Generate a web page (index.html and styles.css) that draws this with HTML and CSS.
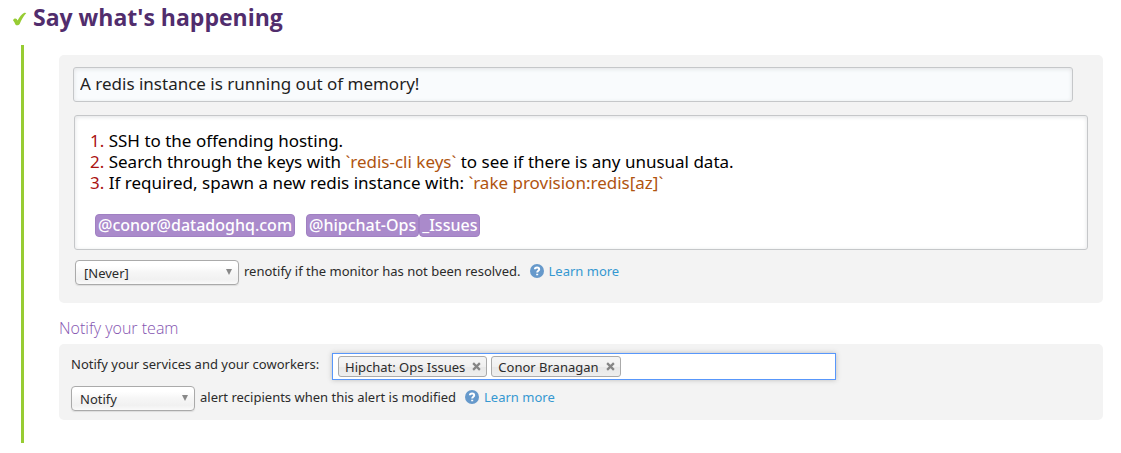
FILE: index.html
```html
<!DOCTYPE html>
<html lang="en">
<head>
<meta charset="utf-8">
<title>Say what's happening</title>
<link rel="stylesheet" href="styles.css">
</head>
<body>
<main class="step">
  <h2 class="step-title">
    <svg class="check" viewBox="0 0 14 14" aria-hidden="true"><path d="M.5 8.200C1.200 6.300 3.200 5.900 4.200 7L5.100 8.500C7 5 9.200 2.200 11.800 .8L13.800 .9C10.900 4.200 8.800 7.900 7.200 11.900C6.200 13.500 3.900 13.700 2.900 12.400C2.400 10.900 1.500 9.400 .5 8.200Z"/></svg>
    Say what's happening
  </h2>
  <div class="step-body">
    <section class="panel message">
      <div class="title-row"><input class="title-input" type="text" aria-label="Monitor title" value="A redis instance is running out of memory!"></div>
      <div class="editor" contenteditable="true" role="textbox" aria-multiline="true" aria-label="Monitor message" spellcheck="false">
        <div class="line"><span class="num">1.</span> SSH to the offending hosting.</div>
        <div class="line"><span class="num">2.</span> Search through the keys with <span class="code">`redis-cli keys`</span> to see if there is any unusual data.</div>
        <div class="line"><span class="num">3.</span> If required, spawn a new redis instance with: <span class="code">`rake provision:redis[az]`</span></div>
        <div class="mentions"><span class="mention">@conor@datadoghq.com</span><span class="mention-pair"><span class="mention">@hipchat-Ops</span><span class="mention">_Issues</span></span></div>
      </div>
      <div class="option-row renotify">
        <span class="select-wrap"><select id="renotify" class="select wide"><option>[Never]</option></select></span>
        <label class="label" for="renotify">renotify if the monitor has not been resolved.</label>
        <svg class="help" viewBox="0 0 14 14" aria-hidden="true"><circle cx="7" cy="7" r="7"/><path d="M4.900 5.300C5 2.900 9.200 2.900 9.200 5.200C9.200 6.700 7.200 6.700 7.200 8.400M7.200 9.800V11.200"/></svg>
        <a class="link" href="#renotify">Learn more</a>
      </div>
    </section>
    <h3 class="sub-title">Notify your team</h3>
    <section class="panel team">
      <div class="option-row">
        <label class="label label-recipients" for="recipients">Notify your services and your coworkers:</label>
        <div class="tokens">
          <span class="token">Hipchat: Ops Issues <button type="button" class="remove" aria-label="Remove Hipchat: Ops Issues"><svg viewBox="0 0 8 8" aria-hidden="true"><path d="M1 1L7 7M7 1L1 7"/></svg></button></span>
          <span class="token">Conor Branagan <button type="button" class="remove" aria-label="Remove Conor Branagan"><svg viewBox="0 0 8 8" aria-hidden="true"><path d="M1 1L7 7M7 1L1 7"/></svg></button></span>
          <input id="recipients" class="token-input" type="text">
        </div>
      </div>
      <div class="option-row">
        <span class="select-wrap"><select id="alert" class="select"><option>Notify</option></select></span>
        <label class="label" for="alert">alert recipients when this alert is modified</label>
        <svg class="help" viewBox="0 0 14 14" aria-hidden="true"><circle cx="7" cy="7" r="7"/><path d="M4.900 5.300C5 2.900 9.200 2.900 9.200 5.200C9.200 6.700 7.200 6.700 7.200 8.400M7.200 9.800V11.200"/></svg>
        <a class="link" href="#alert">Learn more</a>
      </div>
    </section>
  </div>
</main>
</body>
</html>
```
FILE: styles.css
```css
* { box-sizing: border-box; }
body {
  margin: 0;
  background: #fff;
  color: #2b2b2b;
  font: 13px/22px "Noto Sans", "Open Sans", sans-serif;
}
input, select, button { font: inherit; color: inherit; }
.step { padding: 1px 18px 10px 12px; }
.step-title {
  display: flex;
  align-items: center;
  gap: 6px;
  margin: 0 0 12px;
  color: #512d6d;
  font: bold 23px/32px "Open Sans", sans-serif;
}
.check { width: 15px; height: 14px; margin-top: 3px; fill: #97cc33; }
.step-body {
  margin-left: 9px;
  padding: 10px 0 23px 35px;
  border-left: 3px solid #97cc33;
}
.panel {
  border-radius: 5px;
  background: #f3f3f3;
}
.message { padding: 12px 15px 18px 14px; }
.title-row { padding-right: 15px; }
.title-input {
  display: block;
  width: 100%;
  height: 35px;
  padding: 0 6px 2px;
  border: 1px solid #c5c7c9;
  border-radius: 3px;
  background: #f9fbfd;
  box-shadow: inset 0 1px 4px #e0e2e4;
  color: #1f1f1f;
  font-size: 17px;
  outline: 0;
}
.editor {
  margin: 13px 0 10px 1px;
  padding: 14px 15px 12px;
  border: 1px solid #c5c7c9;
  border-radius: 3px;
  background: #fff;
  box-shadow: inset 0 1px 4px #e0e2e4;
  color: #000;
  font-size: 17px;
  line-height: 21px;
  outline: 0;
}
.num { color: #a11; }
.code { color: #b05410; }
.mentions {
  display: flex;
  gap: 11px;
  margin: 21px 0 0 5px;
}
.mention-pair { display: flex; }
.mention {
  padding: 0 2px;
  border: 1px solid #a080c2;
  border-radius: 4px;
  background: #aa8acb;
  color: #fff;
  font-size: 16px;
  font-weight: 500;
}
.option-row {
  display: flex;
  align-items: flex-start;
  gap: 5px;
}
.renotify { padding-left: 2px; }
.label { margin-right: 4px; }
.label-recipients { width: 252px; }
.select-wrap {
  display: inline-flex;
  position: relative;
}
.select-wrap::after {
  position: absolute;
  top: 9px;
  right: 7px;
  border: 3px solid transparent;
  border-top: 6px solid #888;
  border-bottom: 0;
  content: "";
  pointer-events: none;
}
.select {
  width: 124px;
  height: 25px;
  padding: 0 8px;
  border: 1px solid #aaa;
  border-radius: 4px;
  background: linear-gradient(#fff 20%, #f6f6f6 50%, #f1f1f1 80%, #fafafa);
  box-shadow: 0 1px 1px #ddd;
  appearance: none;
}
.select.wide { width: 164px; }
.help { width: 14px; height: 14px; margin-top: 4px; fill: #6699cb; }
.help path { fill: none; stroke: #fff; stroke-width: 2; }
.link { color: #3598d1; text-decoration: none; }
.sub-title {
  margin: 15px 0 6px;
  color: #8454b0;
  font: 300 16px/20px "Open Sans", sans-serif;
}
.team {
  display: grid;
  gap: 6px;
  padding: 9px 12px;
}
.tokens {
  display: flex;
  align-items: center;
  gap: 4px;
  width: 504px;
  height: 27px;
  padding: 0 5px;
  border: 1px solid #5897fb;
  background: #fff;
  box-shadow: 0 0 5px #bbb;
}
.token {
  display: flex;
  flex: none;
  align-items: center;
  gap: 7px;
  height: 21px;
  padding: 0 5px 0 6px;
  border: 1px solid #aaa;
  border-radius: 3px;
  background: linear-gradient(#f4f4f4 20%, #f0f0f0 50%, #e8e8e8 52%, #eee);
}
.remove {
  display: flex;
  padding: 0;
  border: 0;
  background: none;
}
.remove svg { width: 9px; height: 9px; fill: none; stroke: #858585; stroke-width: 2; }
.token-input {
  flex: 1;
  min-width: 0;
  border: 0;
  background: none;
  outline: 0;
}
```
